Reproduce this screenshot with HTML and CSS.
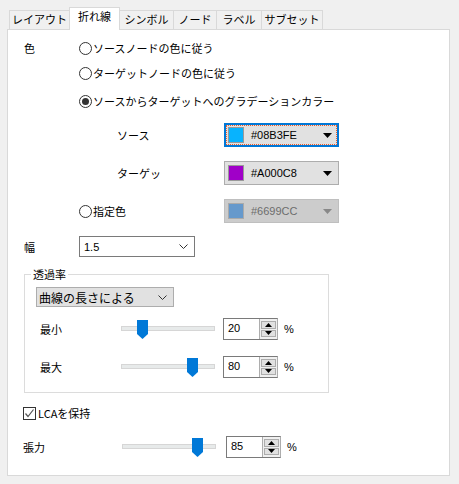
FILE: index.html
```html
<!DOCTYPE html>
<html lang="ja">
<head>
<meta charset="utf-8">
<title>折れ線</title>
<link rel="stylesheet" href="styles.css">
</head>
<body>
<div class="tabs">
  <div class="tab w1">レイアウト</div>
  <div class="tab active w2">折れ線</div>
  <div class="tab w3">シンボル</div>
  <div class="tab w4">ノード</div>
  <div class="tab w5">ラベル</div>
  <div class="tab w6">サブセット</div>
</div>
<div class="panel">
  <div class="row r1"><span class="lbl-color">色</span><label class="radio"><span class="rb"></span>ソースノードの色に従う</label></div>
  <div class="row r2 indent"><label class="radio"><span class="rb"></span>ターゲットノードの色に従う</label></div>
  <div class="row r3 indent"><label class="radio"><span class="rb on"></span>ソースからターゲットへのグラデーションカラー</label></div>
  <div class="row r4 crow"><span class="clbl">ソース</span>
    <div class="cpick focus"><span class="sw sw-src"></span><span class="hex">#08B3FE</span><svg class="carr" width="9" height="5" viewBox="0 0 9 5"><polygon points="0,0 9,0 4.5,5" fill="#000"/></svg></div>
  </div>
  <div class="row r5 crow"><span class="clbl">ターゲッ</span>
    <div class="cpick"><span class="sw sw-tgt"></span><span class="hex">#A000C8</span><svg class="carr" width="9" height="5" viewBox="0 0 9 5"><polygon points="0,0 9,0 4.5,5" fill="#000"/></svg></div>
  </div>
  <div class="row r6 indent"><label class="radio fixed"><span class="rb"></span>指定色</label>
    <div class="cpick disabled"><span class="sw sw-fix"></span><span class="hex">#6699CC</span><svg class="carr" width="9" height="5" viewBox="0 0 9 5"><polygon points="0,0 9,0 4.5,5" fill="#888"/></svg></div>
  </div>
  <div class="row r7"><span class="lbl-color">幅</span>
    <div class="combo white"><span class="ctext">1.5</span><svg class="chev" width="9" height="5" viewBox="0 0 9 5"><polyline points="0.5,0.5 4.5,4.5 8.5,0.5" fill="none" stroke="#333" stroke-width="1"/></svg></div>
  </div>
  <div class="group">
    <span class="legend">透過率</span>
    <div class="combo gray"><span class="ctext">曲線の長さによる</span><svg class="chev" width="9" height="5" viewBox="0 0 9 5"><polyline points="0.5,0.5 4.5,4.5 8.5,0.5" fill="none" stroke="#333" stroke-width="1"/></svg></div>
    <div class="srow s1"><span class="slbl">最小</span>
      <div class="slider"><div class="track"></div><svg class="thumb" style="left:16px" width="11" height="19" viewBox="0 0 11 19"><polygon points="0,0 11,0 11,14 5.5,19 0,14" fill="#0078d7"/></svg></div>
      <div class="spin"><span class="sval">20</span><div class="sbtns"><span class="sb"><svg width="7" height="4" viewBox="0 0 7 4"><polygon points="0,4 7,4 3.5,0" fill="#000"/></svg></span><span class="sb"><svg width="7" height="4" viewBox="0 0 7 4"><polygon points="0,0 7,0 3.5,4" fill="#000"/></svg></span></div></div>
      <span class="pct">%</span>
    </div>
    <div class="srow s2"><span class="slbl">最大</span>
      <div class="slider"><div class="track"></div><svg class="thumb" style="left:66px" width="11" height="19" viewBox="0 0 11 19"><polygon points="0,0 11,0 11,14 5.5,19 0,14" fill="#0078d7"/></svg></div>
      <div class="spin"><span class="sval">80</span><div class="sbtns"><span class="sb"><svg width="7" height="4" viewBox="0 0 7 4"><polygon points="0,4 7,4 3.5,0" fill="#000"/></svg></span><span class="sb"><svg width="7" height="4" viewBox="0 0 7 4"><polygon points="0,0 7,0 3.5,4" fill="#000"/></svg></span></div></div>
      <span class="pct">%</span>
    </div>
  </div>
  <div class="row r8"><label class="check"><span class="cb"><svg width="11" height="11" viewBox="0 0 11 11"><polyline points="1.5,5.5 4,8.5 9.5,1.5" fill="none" stroke="#555" stroke-width="1.2"/></svg></span>LCAを保持</label></div>
  <div class="srow r9"><span class="tlbl">張力</span>
    <div class="slider"><div class="track"></div><svg class="thumb" style="left:70px" width="11" height="19" viewBox="0 0 11 19"><polygon points="0,0 11,0 11,14 5.5,19 0,14" fill="#0078d7"/></svg></div>
    <div class="spin"><span class="sval">85</span><div class="sbtns"><span class="sb"><svg width="7" height="4" viewBox="0 0 7 4"><polygon points="0,4 7,4 3.5,0" fill="#000"/></svg></span><span class="sb"><svg width="7" height="4" viewBox="0 0 7 4"><polygon points="0,0 7,0 3.5,4" fill="#000"/></svg></span></div></div>
    <span class="pct">%</span>
  </div>
</div>
</body>
</html>
```
FILE: styles.css
```css
* { box-sizing: border-box; }
html, body { margin: 0; padding: 0; }
body {
  background: #f0f0f0;
  width: 459px;
  height: 484px;
  font-family: "Noto Sans CJK JP", "Noto Sans", sans-serif;
  font-size: 11px;
  letter-spacing: 0;
  color: #000;
  overflow: hidden;
}
.tabs {
  display: flex;
  align-items: flex-end;
  height: 22px;
  margin-top: 7px;
  padding-left: 9px;
}
.tab {
  height: 19px;
  border: 1px solid #d9d9d9;
  border-bottom: none;
  background: #f0f0f0;
  margin-left: -1px;
  text-align: center;
  line-height: 15px;
  padding-top: 1px;
  white-space: nowrap;
}
.tab:first-child { margin-left: 0; }
.tab.active {
  height: 23px;
  background: #fff;
  margin-bottom: -1px;
  position: relative;
  z-index: 1;
  line-height: 16px;
  padding-top: 0;
}
.w1 { width: 61px; }
.w2 { width: 51px; }
.w3 { width: 55px; }
.w4 { width: 44px; }
.w5 { width: 46px; }
.w6 { width: 62px; }
.panel {
  margin-left: 7px;
  width: 443px;
  height: 447px;
  background: #fff;
  border: 1px solid #d9d9d9;
  padding-left: 16px;
}
.row { display: flex; align-items: center; }
.r1 { margin-top: 8px; height: 20px; }
.r2 { margin-top: 5px; height: 20px; }
.r3 { margin-top: 8px; height: 20px; }
.r4 { margin-top: 12px; height: 24px; }
.r5 { margin-top: 14px; height: 24px; }
.r6 { margin-top: 14px; height: 24px; }
.r7 { margin-top: 13px; height: 21px; }
.r8 { margin-top: 10px; height: 20px; padding-left: 0; margin-left: -1px; }
.indent { padding-left: 55px; }
.lbl-color { width: 55px; }
.radio { display: flex; align-items: center; white-space: nowrap; }
.rb {
  width: 13px; height: 13px;
  border: 1px solid #333;
  border-radius: 50%;
  background: #fff;
  margin-right: 1px;
  display: flex; align-items: center; justify-content: center;
}
.rb.on::after {
  content: "";
  width: 7px; height: 7px;
  border-radius: 50%;
  background: #333;
}
.radio.fixed { width: 145px; }
.crow { padding-left: 93px; }
.clbl { width: 107px; }
.cpick {
  width: 115px; height: 24px;
  border: 1px solid #adadad;
  background: #e1e1e1;
  display: flex; align-items: center;
  padding-left: 3px;
  position: relative;
  font-family: "Liberation Sans", Arial, sans-serif;
  font-size: 11px;
}
.cpick.focus {
  border-color: #0078d7;
  box-shadow: inset 0 0 0 1px #0078d7;
  outline: 1px dotted #f05a28;
  outline-offset: -3px;
}
.cpick.disabled { background: #cccccc; border-color: #bfbfbf; color: #6d6d6d; }
.sw { width: 16px; height: 16px; border: 1px solid #999; }
.sw-src { background: #08b3fe; }
.sw-tgt { background: #a000c8; }
.sw-fix { background: #6699cc; border-color: #aaa; }
.hex { margin-left: 7px; flex: 1; }
.carr { margin-right: 6px; }
.combo {
  display: flex; align-items: center;
  height: 21px;
  padding-left: 4px;
  padding-right: 6px;
}
.combo .ctext { flex: 1; white-space: nowrap; }
.combo.white {
  width: 116px;
  border: 1px solid #7a7a7a;
  background: #fff;
  font-family: "Liberation Sans", Arial, sans-serif;
}
.combo.gray {
  width: 138px; height: 20px;
  border: 1px solid #adadad;
  background: #e1e1e1;
  margin-top: 12px;
  margin-left: 11px;
  padding-left: 2px;
  font-size: 12px;
}
.group {
  margin-top: 17px;
  width: 305px;
  height: 119px;
  border: 1px solid #dcdcdc;
  position: relative;
}
.legend {
  position: absolute;
  left: 6px;
  top: -9px;
  background: #fff;
  padding: 0 2px;
  line-height: 16px;
}
.srow { display: flex; align-items: center; height: 22px; }
.s1 { margin-top: 11px; padding-left: 15px; }
.s2 { margin-top: 16px; padding-left: 15px; }
.slbl { width: 81px; }
.r9 { margin-top: 13px; margin-left: -1px; }
.tlbl { width: 99px; }
.slider { width: 94px; height: 22px; position: relative; margin-right: 8px; }
.track {
  position: absolute;
  left: 0; right: 0; top: 8px;
  height: 5px;
  border: 1px solid #d6d6d6;
  background: #e7eaea;
}
.thumb { position: absolute; top: 2px; }
.r9 .slider { margin-right: 10px; }
.spin {
  width: 55px; height: 22px;
  border: 1px solid #7a7a7a;
  border-right-color: #adadad;
  display: flex;
  background: #fff;
}
.sval {
  flex: 1;
  padding-left: 4px;
  line-height: 19px;
  font-family: "Liberation Sans", Arial, sans-serif;
  font-size: 11px;
}
.sbtns {
  width: 18px;
  border-left: 1px solid #adadad;
  background: #f0f0f0;
  display: flex; flex-direction: column;
  padding: 2px 1px;
  gap: 1px;
}
.sb {
  flex: 1;
  background: #e1e1e1;
  border: 1px solid #adadad;
  display: flex; align-items: center; justify-content: center;
}
.pct {
  margin-left: 6px;
  font-family: "Liberation Sans", Arial, sans-serif;
  font-size: 11px;
}
.check { display: flex; align-items: center; white-space: nowrap; }
.cb {
  width: 13px; height: 13px;
  border: 1px solid #333;
  background: #fff;
  display: flex; align-items: center; justify-content: center;
  margin-right: 2px;
}
```
